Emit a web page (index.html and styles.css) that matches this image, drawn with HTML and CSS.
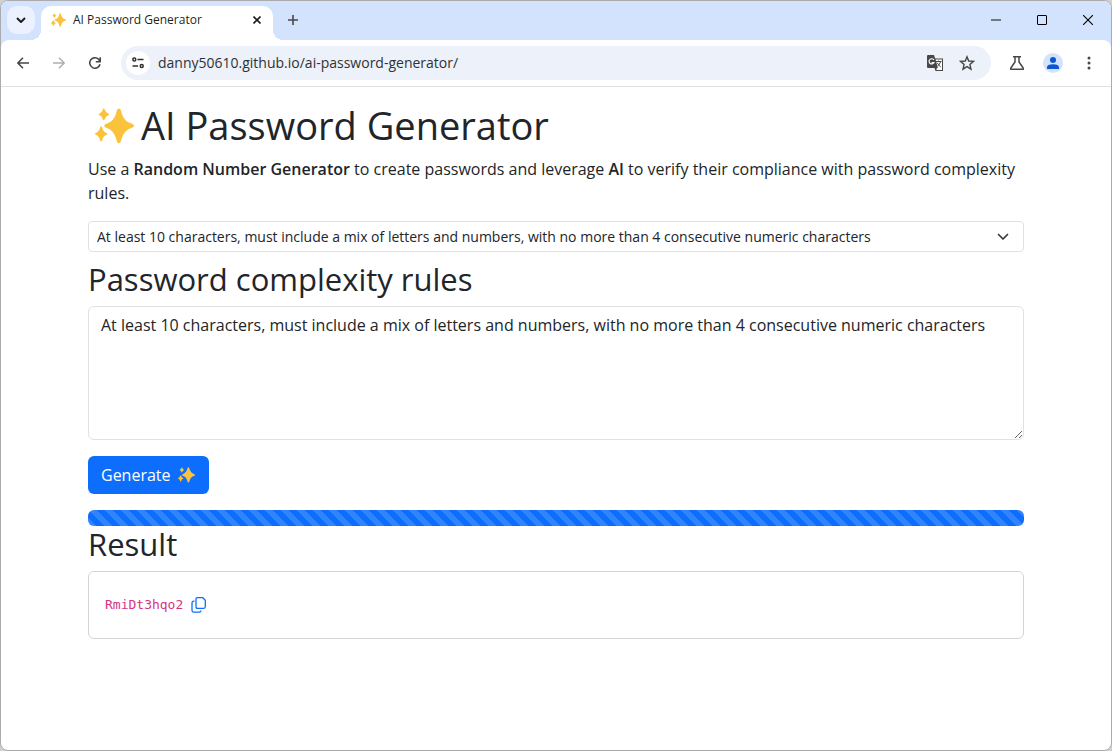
FILE: index.html
```html
<!DOCTYPE html>
<html lang="en">
<head>
    <meta charset="UTF-8">
    <meta name="viewport" content="width=device-width, initial-scale=1.0">
    <title>AI Password Generator</title>
    <link rel="stylesheet" href="styles.css">
</head>
<body>
    <!-- Sparkles shape, shared by tab, heading and button -->
    <svg class="defs" aria-hidden="true">
        <symbol id="sparkles" viewBox="0 0 40 36">
            <path fill="#fac33b" d="M24.500 0q1.500 0 2 1.800 2.500 12 12 14.200 1.500.5 1.500 1.800t-1.500 1.800q-9.500 2.400-12 14.200-.5 1.800-2 1.800t-2-1.800q-2.500-11.800-11.500-14.200-1.500-.5-1.500-1.800t1.500-1.800q9-2.200 11.500-14.200.5-1.800 2-1.800z"/>
            <path fill="#fac33b" d="M9 0q.8 0 1 1 .9 3.200 3.600 4.200.8.400.8.900t-.8.900q-2.700 1-3.600 4.200-.2 1-1 1t-1-1Q7.100 8 4.600 7q-.8-.4-.8-.9t.8-.9Q7.100 4.200 8 1q.2-1 1-1zM6.300 18.500q.9 0 1.100 1.100 1.100 4.500 4.400 5.600.8.300.8.900t-.8.900q-3.300 1.200-4.400 5.700-.2 1.100-1.100 1.100t-1.100-1.100Q4.100 28.200.8 27q-.8-.3-.8-.9t.8-.9q3.300-1.100 4.400-5.600.2-1.100 1.100-1.100z"/>
        </symbol>
    </svg>

    <div class="window">
        <!-- Tabs -->
        <div class="tab-bar">
            <button class="tab-search" type="button" aria-label="Search tabs">
                <svg width="10" height="6" viewBox="0 0 10 6"><path d="M1 1l4 4 4-4" fill="none" stroke="#1f1f1f" stroke-width="2"/></svg>
            </button>
            <div class="tab">
                <svg class="favicon"><use href="#sparkles"/></svg>
                <span class="tab-title">AI Password Generator</span>
                <button class="icon-button" type="button" aria-label="Close tab">
                    <svg width="8" height="8" viewBox="0 0 8 8"><path d="M.5.5l7 7M7.500.5l-7 7" stroke="#1f1f1f" stroke-width="1.600"/></svg>
                </button>
            </div>
            <button class="icon-button new-tab" type="button" aria-label="New tab">
                <svg width="10" height="10" viewBox="0 0 10 10"><path d="M5 0v10M0 5h10" stroke="#474747" stroke-width="1.600"/></svg>
            </button>
            <div class="window-controls">
                <button type="button" aria-label="Minimize">
                    <svg width="10" height="10" viewBox="0 0 10 10"><path d="M0 5h10" stroke="#555" stroke-width="1.300"/></svg>
                </button>
                <button type="button" aria-label="Maximize">
                    <svg width="10" height="10" viewBox="0 0 10 10"><rect x=".5" y=".5" width="9" height="9" rx=".5" fill="none" stroke="#000"/></svg>
                </button>
                <button type="button" aria-label="Close">
                    <svg width="10" height="10" viewBox="0 0 10 10"><path d="M0 0l10 10M10 0L0 10" stroke="#000" stroke-width="1.100"/></svg>
                </button>
            </div>
        </div>

        <!-- Toolbar -->
        <div class="toolbar">
            <button class="tool" type="button" aria-label="Back">
                <svg width="12" height="12" viewBox="0 0 12 12"><path d="M6 .7L.9 6 6 11.300M1 6h11" fill="none" stroke="#474747" stroke-width="1.500"/></svg>
            </button>
            <button class="tool" type="button" aria-label="Forward">
                <svg width="12" height="12" viewBox="0 0 12 12"><path d="M6 .7L11.100 6 6 11.300M11 6H0" fill="none" stroke="#b0b0b0" stroke-width="1.500"/></svg>
            </button>
            <button class="tool" type="button" aria-label="Reload">
                <svg width="12" height="12" viewBox="0 0 12 12"><path d="M11 7.200A5.200 5.200 0 1 1 10.200 3L11.200 4.600M11.200.2v4.500H6.800" fill="none" stroke="#474747" stroke-width="1.600"/></svg>
            </button>
            <div class="address-bar">
                <button class="site-info" type="button" aria-label="Site information">
                    <svg width="12" height="12" viewBox="0 0 12 12" fill="none" stroke="#303030" stroke-width="1.500"><circle cx="2.300" cy="2.500" r="1.500"/><path d="M5.500 2.500h6M.5 9h5.500"/><circle cx="9.700" cy="9" r="1.500"/></svg>
                </button>
                <input class="address" type="text" aria-label="Address" value="danny50610.github.io/ai-password-generator/">
                <button class="icon-button" type="button" aria-label="Translate this page">
                    <svg width="18" height="18" viewBox="0 0 18 18">
                        <path d="M2 1h6l1.200 3.500H17V17H9.500L8.500 14H2q-1 0-1-1V2q0-1 1-1z" fill="#474747"/>
                        <path d="M9.600 5.500H16V16h-5l-1-1 1.800-1z" fill="#fff"/>
                        <path d="M7.900 6A2.600 2.600 0 1 0 8 8.500H5.500" fill="none" stroke="#fff" stroke-width="1.200"/>
                        <path d="M10 7.500h5.500M12.700 6.500v1M14.600 7.500q-.8 3-3.300 5M11.200 8.800q1.300 2.500 3.600 4.200" fill="none" stroke="#474747"/>
                    </svg>
                </button>
                <button class="icon-button" type="button" aria-label="Bookmark this page">
                    <svg width="16" height="16" viewBox="0 0 16 16"><path d="M8 1.800l1.700 4.200 4.800.4-3.600 3.100 1.100 4.700L8 11.700l-4 2.500 1.100-4.700L1.500 6.400 6.300 6z" fill="none" stroke="#474747" stroke-width="1.400"/></svg>
                </button>
            </div>
            <button class="tool" type="button" aria-label="Experiments">
                <svg width="16" height="16" viewBox="0 0 16 16"><path d="M4 1.800h8M6 2v5L1.800 13v1.200h12.400V13L10 7V2" fill="none" stroke="#474747" stroke-width="1.500"/></svg>
            </button>
            <button class="tool" type="button" aria-label="Profile">
                <svg width="20" height="20" viewBox="0 0 20 20"><circle cx="10" cy="10" r="10" fill="#d3e3fd"/><circle cx="10" cy="7" r="3" fill="#0b57d0"/><path d="M4 16v-1.500Q4 11.300 10 11.300t6 3.200V16z" fill="#0b57d0"/></svg>
            </button>
            <button class="tool" type="button" aria-label="Menu">
                <svg width="4" height="14" viewBox="0 0 4 14" fill="#474747"><circle cx="2" cy="2" r="1.500"/><circle cx="2" cy="7" r="1.500"/><circle cx="2" cy="12" r="1.500"/></svg>
            </button>
        </div>

        <!-- Page -->
        <main class="container">
            <h1><svg class="heading-icon"><use href="#sparkles"/></svg>AI Password Generator</h1>
            <p>Use a <strong>Random Number Generator</strong> to create passwords and leverage <strong>AI</strong> to verify their compliance with password complexity rules.</p>

            <div class="select-wrap">
                <select aria-label="Preset rules">
                    <option>At least 10 characters, must include a mix of letters and numbers, with no more than 4 consecutive numeric characters</option>
                </select>
                <svg class="chevron" width="12" height="8" viewBox="0 0 12 8"><path d="M1.500 1.500L6 6l4.500-4.500" fill="none" stroke="#343a40" stroke-width="1.700" stroke-linecap="round" stroke-linejoin="round"/></svg>
            </div>

            <h2><label for="rules">Password complexity rules</label></h2>
            <textarea id="rules">At least 10 characters, must include a mix of letters and numbers, with no more than 4 consecutive numeric characters</textarea>

            <button class="generate" type="button">Generate <svg class="button-icon"><use href="#sparkles"/></svg></button>

            <div class="progress" role="progressbar" aria-label="Progress" aria-valuenow="100" aria-valuemin="0" aria-valuemax="100"></div>

            <h2>Result</h2>
            <div class="card">
                <code>RmiDt3hqo2</code>
                <button class="icon-button" type="button" aria-label="Copy password">
                    <svg width="16" height="16" viewBox="0 0 16 16" fill="none" stroke="#0d6efd" stroke-width="1.300"><path d="M6.500.7h5.200L14.300 3.300v6.500q0 1.500-1.500 1.500H6.500Q5 11.300 5 9.800V2.200Q5 .7 6.500.7z"/><path d="M3.500 4.200H2.700Q1 4.200 1 5.900v7.500q0 1.800 1.700 1.800h5.600q1.700 0 1.700-1.700"/></svg>
                </button>
            </div>
        </main>
    </div>
</body>
</html>
```

FILE: styles.css
```css
* {
    box-sizing: border-box;
}
body {
    margin: 0;
    background: #d0d0d0;
    color: #212529;
    font-family: "Open Sans", "Noto Sans", sans-serif;
    font-size: 16px;
    line-height: 24px;
}
button, input, select, textarea {
    margin: 0;
    font: inherit;
    color: inherit;
}
button {
    display: flex;
    align-items: center;
    justify-content: center;
    padding: 0;
    border: 0;
    background: none;
    cursor: pointer;
}
svg {
    flex: none;
}
.defs {
    display: none;
}
.window {
    display: flex;
    flex-direction: column;
    min-height: 100vh;
    border: 1px solid #ababab;
    border-radius: 8px;
    background: #fff;
    overflow: hidden;
}

/* Tabs */
.tab-bar {
    display: flex;
    align-items: center;
    height: 47px;
    margin-bottom: -8px;
    padding: 0 0 9px 6px;
    background: #d3e3fd;
}
.tab-search {
    width: 28px;
    height: 28px;
    border-radius: 10px;
    background: #ebf1fe;
}
.tab {
    position: relative;
    display: flex;
    align-items: center;
    align-self: flex-end;
    gap: 7px;
    width: 232px;
    height: 34px;
    margin-left: 6px;
    margin-bottom: -1px;
    padding: 0 8px 6px 10px;
    border-radius: 10px 10px 0 0;
    background: #fff;
}
.tab::before, .tab::after {
    content: "";
    position: absolute;
    bottom: 0;
    width: 10px;
    height: 10px;
}
.tab::before {
    right: 100%;
    background: radial-gradient(circle at 0 0, #d3e3fd 10px, #fff 10px);
}
.tab::after {
    left: 100%;
    background: radial-gradient(circle at 100% 0, #d3e3fd 10px, #fff 10px);
}
.favicon {
    width: 15px;
    height: 14px;
}
.tab-title {
    flex: 1;
    color: #1f1f1f;
    font-size: 12px;
    line-height: 16px;
}
.icon-button {
    width: 16px;
    height: 16px;
}
.new-tab {
    margin-left: 12px;
}
.window-controls {
    display: flex;
    margin-left: auto;
}
.window-controls button {
    width: 46px;
    height: 38px;
}

/* Toolbar */
.toolbar {
    position: relative;
    display: flex;
    align-items: center;
    gap: 8px;
    height: 47px;
    padding: 0 8px;
    border-bottom: 1px solid #e0e0e0;
    border-radius: 8px 8px 0 0;
    background: #fff;
}
.tool {
    width: 28px;
    height: 28px;
}
.address-bar {
    display: flex;
    flex: 1;
    align-items: center;
    gap: 16px;
    height: 34px;
    margin: 0 4px;
    padding: 0 16px 0 5px;
    border-radius: 17px;
    background: #ecf1fa;
}
.site-info {
    width: 24px;
    height: 24px;
    border-radius: 50%;
    background: #fff;
}
.address {
    flex: 1;
    min-width: 0;
    margin-left: -8px;
    padding: 0;
    border: 0;
    outline: 0;
    background: none;
    color: #303134;
    font-size: 14px;
}

/* Page */
.container {
    width: 100%;
    max-width: 960px;
    margin: 0 auto;
    padding: 16px 12px;
}
h1, h2 {
    margin: 0 0 9px;
    font-weight: 400;
}
h1 {
    display: flex;
    align-items: center;
    gap: 7px;
    padding-left: 7px;
    font-size: 38px;
    line-height: 45px;
}
.heading-icon {
    width: 39px;
    height: 36px;
}
h2 {
    font-size: 31px;
    line-height: 36px;
}
p {
    margin: 0 0 16px;
}
strong {
    font-weight: 600;
}
.select-wrap {
    position: relative;
    margin-bottom: 9px;
}
select {
    display: block;
    width: 100%;
    height: 31px;
    padding: 0 32px 0 8px;
    border: 1px solid #dee2e6;
    border-radius: 4px;
    background: #fff;
    font-size: 14px;
    appearance: none;
}
.chevron {
    position: absolute;
    top: 12px;
    right: 15px;
    pointer-events: none;
}
textarea {
    display: block;
    width: 100%;
    height: 134px;
    margin-bottom: 16px;
    padding: 6px 12px;
    border: 1px solid #dee2e6;
    border-radius: 6px;
    resize: vertical;
}
.generate {
    gap: 7px;
    height: 38px;
    margin-bottom: 16px;
    padding: 0 14px 0 13px;
    border-radius: 6px;
    background: #0d6efd;
    color: #fff;
}
.button-icon {
    width: 17px;
    height: 16px;
}
.progress {
    height: 16px;
    border-radius: 6px;
    background-color: #0d6efd;
    background-image: linear-gradient(45deg, rgba(255, 255, 255, 0.15) 25%, transparent 25%, transparent 50%, rgba(255, 255, 255, 0.15) 50%, rgba(255, 255, 255, 0.15) 75%, transparent 75%);
    background-size: 16px 16px;
}
.card {
    display: flex;
    align-items: center;
    gap: 8px;
    height: 68px;
    padding: 0 16px;
    border: 1px solid #d3d4d5;
    border-radius: 6px;
}
code {
    color: #d63384;
    font-family: "DejaVu Sans Mono", monospace;
    font-size: 13px;
}
```
